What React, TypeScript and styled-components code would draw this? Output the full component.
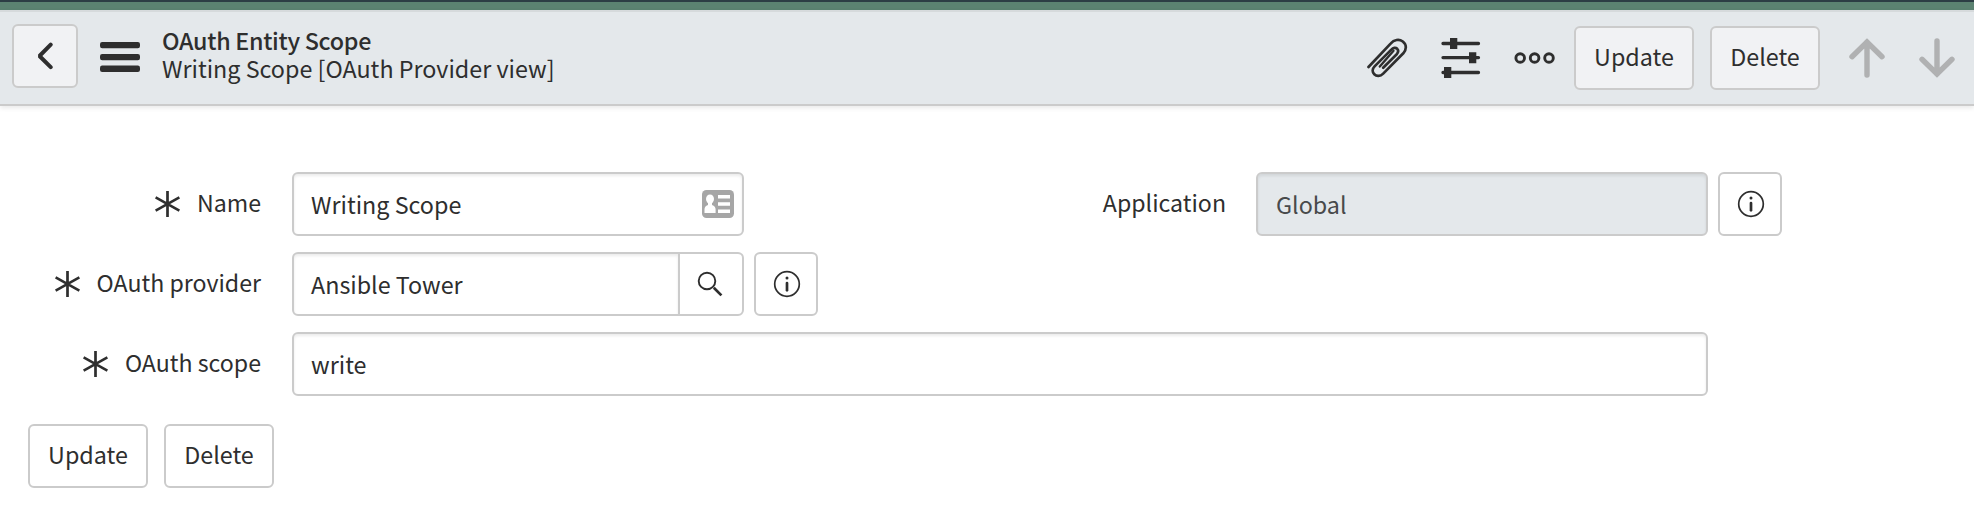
import React from "react";
import styled, { createGlobalStyle } from "styled-components";

const GlobalStyle = createGlobalStyle`
  * { box-sizing: border-box; }
  body {
    margin: 0;
    background: #fff;
    color: #2e2e2e;
    font-family: "Source Sans Pro", "Noto Sans CJK SC", "Noto Sans", sans-serif;
    font-size: 23.3px;
    line-height: 28px;
  }
  svg { display: block; flex: none; }
`;

const Page = styled.div`
  width: 1974px;
  height: 512px;
  overflow: hidden;
  background: #fff;
`;

const BannerEdge = styled.div`
  height: 10px;
  background: #5b8271;
  border-top: 2px solid #2c3d44;
`;

const Header = styled.header`
  display: flex;
  align-items: flex-start;
  height: 96px;
  padding: 12px 19px 0 12px;
  background: #e4e8eb;
  border-top: 2px solid #d6dadc;
  border-bottom: 2px solid #cbcbcb;
  box-shadow: 0 2px 5px rgba(0, 0, 0, 0.09);
`;

const Button = styled.button<{ $width: number; $tinted?: boolean }>`
  display: flex;
  align-items: center;
  justify-content: center;
  flex: none;
  width: ${(p) => p.$width}px;
  height: 64px;
  padding: 0;
  border: 2px solid #cbcbcb;
  border-radius: 6px;
  background: ${(p) => (p.$tinted ? "#f1f2f4" : "#fff")};
  color: inherit;
  font: inherit;
`;

const TextButton = styled(Button)`
  padding-bottom: 4px;
`;

const InfoButton = styled(Button)`
  padding-left: 2px;
`;

const BackButton = styled(Button)`
  padding-right: 1px;
`;

const MenuButton = styled.div`
  margin: 17px 22px 0;
`;

const Titles = styled.div`
  flex: 1;
  padding-top: 2px;
  line-height: 28px;
`;

const Title = styled.div`
  font-weight: 500;
  letter-spacing: -0.3px;
`;

const Subtitle = styled.div``;

const Actions = styled.div`
  display: flex;
  align-items: center;
  padding-top: 2px;
`;

const IconSlot = styled.span<{ $gap: number }>`
  margin-right: ${(p) => p.$gap}px;
`;

const ActionButtons = styled.div`
  display: flex;
  gap: 16px;
  margin-right: 29px;
`;

const Form = styled.main`
  display: grid;
  grid-template-columns: 261px 452px 451px 526px;
  column-gap: 31px;
  row-gap: 16px;
  padding-top: 66px;
`;

const Label = styled.label`
  display: flex;
  align-items: center;
  justify-content: flex-end;
  gap: 17px;
  height: 64px;
  font-size: 23.15px;
`;

const LabelText = styled.span`
  padding-bottom: 4px;
`;

const Control = styled.div<{ $wide?: boolean; $second?: boolean }>`
  display: flex;
  gap: 10px;
  ${(p) => p.$wide && "grid-column: 2 / 5; width: 1490px;"}
  ${(p) => p.$second && "margin-left: -1px;"}
`;

const Field = styled.div<{ $readOnly?: boolean; $joined?: boolean }>`
  display: flex;
  align-items: center;
  justify-content: space-between;
  flex: none;
  width: ${(p) => (p.$joined ? "388px" : "452px")};
  height: 64px;
  padding: 0 8px 0 ${(p) => (p.$readOnly ? "18px" : "17px")};
  border: 2px solid #cbcbcb;
  border-radius: ${(p) => (p.$joined ? "6px 0 0 6px" : "6px")};
  background: ${(p) => (p.$readOnly ? "#e4e8eb" : "#fff")};
  color: ${(p) => (p.$readOnly ? "#484a4b" : "#2e2e2e")};
  box-shadow: inset 0 2px 3px rgba(0, 0, 0, 0.08);
`;

const WideField = styled(Field)`
  width: 1416px;
`;

const Reference = styled.div`
  display: flex;
`;

const LookupButton = styled(Button)`
  margin-left: -2px;
  padding-right: 2px;
  border-radius: 0 6px 6px 0;
`;

const FormButtons = styled.footer`
  display: flex;
  gap: 16px;
  padding: 28px 28px 0;
`;

const Required = () => (
  <svg width="25" height="26" viewBox="0 0 25 26" stroke="#2e2e2e" strokeWidth="2.7">
    <path d="M12.5 0V26M.6 6.4L24.4 19.6M24.4 6.4L.6 19.6" />
  </svg>
);

const Info = () => (
  <svg width="28" height="28" viewBox="0 0 28 28" fill="none" stroke="#2e2e2e">
    <circle cx="14" cy="14" r="12.3" strokeWidth="1.7" />
    <path d="M14 13V20.3" strokeWidth="2.7" strokeLinecap="round" />
    <circle cx="14" cy="8" r="1.5" fill="#2e2e2e" stroke="none" />
  </svg>
);

const Search = () => (
  <svg width="26" height="26" viewBox="0 0 26 26" fill="none" stroke="#2e2e2e">
    <circle cx="10" cy="10" r="8.3" strokeWidth="1.9" />
    <path d="M16.8 16.8L24.4 24.4" strokeWidth="2.7" />
  </svg>
);

const ContactCard = () => (
  <svg width="32" height="28" viewBox="0 0 32 28">
    <rect width="32" height="28" rx="4.5" fill="#a6a6a6" />
    <g fill="#fff">
      <ellipse cx="8" cy="9" rx="4" ry="4.6" />
      <path d="M6 12h4v3c2.5.6 3.6 2.5 3.6 4.5V23H2.5V19.5C2.5 17.5 3.5 15.6 6 15Z" />
      <path d="M16 5h12v3.4H16zM16 12.3h12v3.4H16zM16 19.5h12V23H16z" />
    </g>
  </svg>
);

const ChevronLeft = () => (
  <svg width="18" height="28" viewBox="0 0 18 28" fill="none" stroke="#2e2e2e" strokeWidth="4" strokeLinecap="round">
    <path d="M14.7 2.6L3.5 14L14.7 25.2" strokeLinejoin="bevel" />
  </svg>
);

const Hamburger = () => (
  <svg width="40" height="32" viewBox="0 0 40 32" fill="#2e2e2e">
    <rect y="1" width="40" height="6.2" rx="2.2" />
    <rect y="13" width="40" height="6.2" rx="2.2" />
    <rect y="24.6" width="40" height="6.4" rx="2.2" />
  </svg>
);

const Paperclip = () => (
  <svg width="42" height="40" viewBox="0 0 42 40" fill="none" stroke="#2e2e2e" strokeWidth="2.7" strokeLinecap="round" strokeLinejoin="round">
    <path d="M2.5 29L24.6 5.6C28 1.7 33 .7 36.8 3.5C41 6.8 40.5 11.8 37.3 15.3L17.2 35.6C14.2 38.6 10.5 38.6 8.3 36.3C6 34 6.2 30.8 8.8 28.1L25.3 11.6C27.2 9.6 29.6 9.2 31.2 10.8C32.7 12.4 32.3 14.5 30.5 16.5L17.2 29.8" />
    <path d="M13.8 28.5L27.5 12.8" strokeWidth="2.4" />
  </svg>
);

const Sliders = () => (
  <svg width="40" height="40" viewBox="0 0 40 40" fill="#2e2e2e">
    <path d="M2 5.5H37.5M2 19.6H37.5M2 34.5H37.5" stroke="#2e2e2e" strokeWidth="3.3" strokeLinecap="round" />
    <path d="M9 0h7.3v11H9zM28 14.2h7.3v11H28zM3 29h7.3v11H3z" />
  </svg>
);

const Dots = () => (
  <svg width="42" height="12" viewBox="0 0 42 12" fill="none" stroke="#2e2e2e" strokeWidth="2.9">
    <circle cx="6.2" cy="6" r="4.3" />
    <circle cx="20.6" cy="6" r="4.3" />
    <circle cx="35" cy="6" r="4.3" />
  </svg>
);

const Arrow = ({ down }: { down?: boolean }) => (
  <svg width="36" height="40" viewBox="0 0 36 40" fill="none" stroke="#b0b1b2" strokeWidth="5.4" strokeLinecap="round">
    <path
      d={down ? "M18 3V36M3 21.3L18 36L33 21.3" : "M18 37V4M3 18.7L18 4L33 18.7"}
      strokeLinejoin="miter"
    />
  </svg>
);

export default function App() {
  return (
    <Page>
      <GlobalStyle />
      <BannerEdge />
      <Header>
        <BackButton $width={66} $tinted aria-label="Back">
          <ChevronLeft />
        </BackButton>
        <MenuButton>
          <Hamburger />
        </MenuButton>
        <Titles>
          <Title>OAuth Entity Scope</Title>
          <Subtitle>Writing Scope [OAuth Provider view]</Subtitle>
        </Titles>
        <Actions>
          <IconSlot $gap={33}>
            <Paperclip />
          </IconSlot>
          <IconSlot $gap={33}>
            <Sliders />
          </IconSlot>
          <IconSlot $gap={18}>
            <Dots />
          </IconSlot>
          <ActionButtons>
            <TextButton $width={120} $tinted>Update</TextButton>
            <TextButton $width={110} $tinted>Delete</TextButton>
          </ActionButtons>
          <IconSlot $gap={34}>
            <Arrow />
          </IconSlot>
          <Arrow down />
        </Actions>
      </Header>
      <Form>
        <Label>
          <Required />
          <LabelText>Name</LabelText>
        </Label>
        <Control>
          <Field>
            Writing Scope
            <ContactCard />
          </Field>
        </Control>
        <Label>
          <LabelText>Application</LabelText>
        </Label>
        <Control $second>
          <Field $readOnly>Global</Field>
          <InfoButton $width={64} aria-label="Application info">
            <Info />
          </InfoButton>
        </Control>

        <Label>
          <Required />
          <LabelText>OAuth provider</LabelText>
        </Label>
        <Control $wide>
          <Reference>
            <Field $joined>Ansible Tower</Field>
            <LookupButton $width={66} aria-label="Look up">
              <Search />
            </LookupButton>
          </Reference>
          <InfoButton $width={64} aria-label="Provider info">
            <Info />
          </InfoButton>
        </Control>

        <Label>
          <Required />
          <LabelText>OAuth scope</LabelText>
        </Label>
        <Control $wide>
          <WideField>write</WideField>
        </Control>
      </Form>
      <FormButtons>
        <TextButton $width={120}>Update</TextButton>
        <TextButton $width={110}>Delete</TextButton>
      </FormButtons>
    </Page>
  );
}
